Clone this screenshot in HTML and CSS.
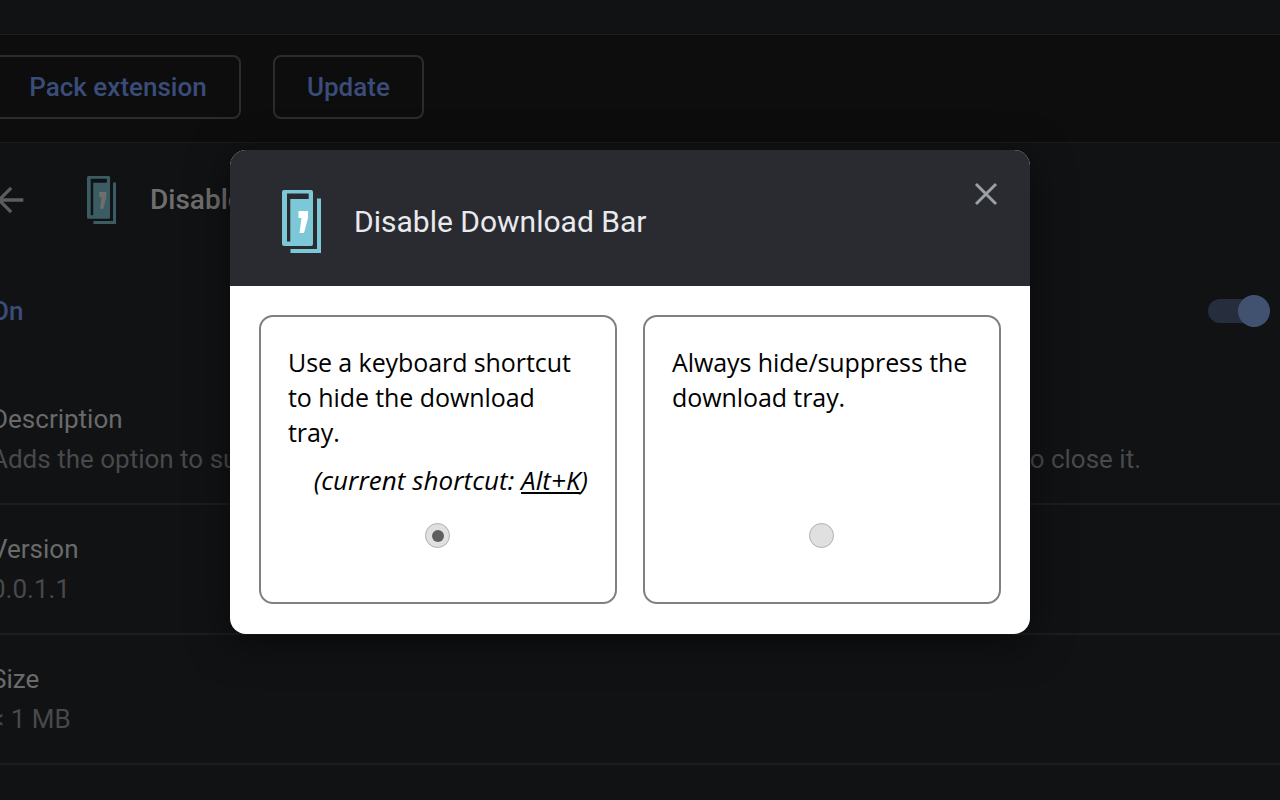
FILE: index.html
```html
<!DOCTYPE html>
<html lang="en">

<head>
    <meta charset="UTF-8">
    <meta name="viewport" content="width=device-width, initial-scale=1.0">
    <title>Disable Download Bar</title>
    <link rel="stylesheet" href="styles.css">
</head>

<body>
    <!-- Extensions page behind the dialog -->
    <div class="page">
        <div class="top-bar"></div>
        <div class="actions">
            <button class="action-button pack-button">Pack extension</button>
            <button class="action-button">Update</button>
        </div>
        <div class="details">
            <div class="details-head">
                <svg class="back-icon" viewBox="0 0 24 24" width="40" height="40">
                    <path d="M20 11H7.830l5.590-5.590L12 4l-8 8 8 8 1.410-1.410L7.830 13H20v-2z" fill="#5c5c5c"/>
                </svg>
                <svg class="ext-icon" viewBox="0 0 39 63" width="29" height="48" preserveAspectRatio="none">
                    <path d="M35 8.500h4V63H8.500v-4H35z" fill="#3c5c63"/>
                    <rect width="31" height="56" rx="2" fill="#3c5c63"/>
                    <path d="M5 3.500h21.700V9H8.300v42.500H5z" fill="#111214"/>
                    <path d="M16.500 21h9.500v7l-4 15h-4.500l2-15h-3z" fill="#6e6e6e"/>
                </svg>
                <span class="ext-name">Disable Download Bar</span>
            </div>
            <div class="row on-row">
                <span class="on-label">On</span>
                <div class="toggle"><div class="toggle-knob"></div></div>
            </div>
            <div class="row block-row desc-row">
                <div class="row-title">Description</div>
                <div class="row-value">Adds the option to suppress the download tray entirely or simply use a keyboard shortcut to close it.</div>
            </div>
            <div class="row block-row">
                <div class="row-title">Version</div>
                <div class="row-value">0.0.1.1</div>
            </div>
            <div class="row block-row">
                <div class="row-title">Size</div>
                <div class="row-value">&lt; 1 MB</div>
            </div>
        </div>
    </div>

    <!-- Options dialog -->
    <div class="dialog">
        <div class="dialog-head">
            <svg class="dialog-icon" viewBox="0 0 39 63" width="39" height="63">
                <path d="M35 8.500h4V63H8.500v-4H35z" fill="#7cc8d6"/>
                <rect width="31" height="56" rx="2" fill="#7cc8d6"/>
                <path d="M5 3.500h21.700V9H8.300v42.500H5z" fill="#2a2b30"/>
                <path d="M16.500 21h9.500v7l-4 15h-4.500l2-15h-3z" fill="#ffffff"/>
            </svg>
            <h2 class="dialog-title">Disable Download Bar</h2>
            <svg class="close-icon" viewBox="0 0 24 24" width="24" height="24">
                <path d="M2 2l20 20M22 2L2 22" fill="none" stroke="#9aa0a6" stroke-width="3"/>
            </svg>
        </div>
        <div class="dialog-body">
            <div class="option">
                <p class="option-text">Use a keyboard shortcut to hide the download tray.</p>
                <p class="option-note"><i>(current shortcut: <u>Alt+K</u>)</i></p>
                <div class="radio radio-on"></div>
            </div>
            <div class="option">
                <p class="option-text">Always hide/suppress the download tray.</p>
                <div class="radio"></div>
            </div>
        </div>
    </div>
</body>

</html>
```

FILE: styles.css
```css
html,
body {
    margin: 0;
    padding: 0;
    height: 100%;
    overflow: hidden;
    background-color: #111214;
    font-family: Roboto, sans-serif;
}

.page {
    margin-left: -24px;
    width: 1328px;
}

.top-bar {
    height: 34px;
    background-color: #111214;
    border-bottom: 1px solid #1e1e1f;
}

.actions {
    height: 103px;
    padding-bottom: 4px;
    background-color: #0d0d0e;
    border-bottom: 1px solid #1a1a1b;
    display: flex;
    align-items: center;
    gap: 32px;
}

.action-button {
    height: 64px;
    padding: 0 32px;
    background: transparent;
    border: 2px solid #2c2c2d;
    border-radius: 8px;
    color: #3a4c78;
    font-family: Roboto, sans-serif;
    font-size: 26px;
    font-weight: 500;
}

.pack-button {
    width: 265px;
    padding: 0 0 0 19px;
}

.details {
    padding-left: 24px;
    background-color: #111214;
}

.details-head {
    height: 113px;
    display: flex;
    align-items: center;
    color: #6e6e6e;
}

.back-icon {
    margin-left: -10px;
}

.ext-icon {
    margin-left: 57px;
}

.ext-name {
    margin-left: 34px;
    font-size: 28px;
    font-weight: 500;
}

.row {
    margin-left: -24px;
    border-bottom: 2px solid #1d1d1f;
}

.on-row {
    height: 110px;
    padding-right: 40px;
    display: flex;
    align-items: center;
    justify-content: space-between;
    border-bottom: none;
}

.on-label {
    margin-left: 15px;
    font-size: 26px;
    font-weight: 500;
    color: #3a4c78;
}

.toggle {
    width: 56px;
    height: 24px;
    border-radius: 12px;
    background-color: #262d3c;
    position: relative;
}

.toggle-knob {
    position: absolute;
    right: -6px;
    top: -4px;
    width: 32px;
    height: 32px;
    border-radius: 50%;
    background-color: #415271;
}

.block-row {
    padding: 24px 0 24px 15px;
}

.desc-row {
    padding-top: 33px;
}

.row-title {
    font-size: 26px;
    line-height: 40px;
    color: #6a6a6a;
}

.row-value {
    font-size: 26px;
    line-height: 40px;
    color: #48494b;
}

.dialog {
    position: absolute;
    left: 230px;
    top: 150px;
    width: 800px;
    height: 484px;
    border-radius: 16px;
    overflow: hidden;
    background-color: #ffffff;
    box-shadow: 0 8px 40px rgba(0, 0, 0, 0.5);
}

.dialog-head {
    height: 136px;
    background-color: #2a2b30;
    display: flex;
    align-items: center;
    position: relative;
}

.dialog-icon {
    margin-left: 52px;
    margin-top: 7px;
}

.dialog-title {
    margin: 6px 0 0 33px;
    font-size: 30px;
    font-weight: 400;
    color: #e8eaed;
}

.close-icon {
    position: absolute;
    right: 32px;
    top: 32px;
}

.dialog-body {
    display: flex;
    gap: 26px;
    padding: 29px;
}

.option {
    flex: 1;
    height: 289px;
    box-sizing: border-box;
    padding: 28px 27px;
    border: 2px solid #808080;
    border-radius: 14px;
    position: relative;
    font-family: "Open Sans", sans-serif;
    font-size: 25px;
    line-height: 35px;
    letter-spacing: -0.08px;
    color: #000000;
}

.option-text {
    margin: 0;
}

.option-note {
    margin: 13px 0 0;
    text-align: right;
    font-size: 26px;
    letter-spacing: 0.06px;
}

.radio {
    position: absolute;
    left: 164px;
    top: 206px;
    width: 25px;
    height: 25px;
    box-sizing: border-box;
    border-radius: 50%;
    border: 1px solid #b0b0b0;
    background-color: #e0e0e0;
}

.radio-on::after {
    content: "";
    display: block;
    width: 12px;
    height: 12px;
    margin: 5.500px;
    border-radius: 50%;
    background-color: #5e5e5e;
}
```
